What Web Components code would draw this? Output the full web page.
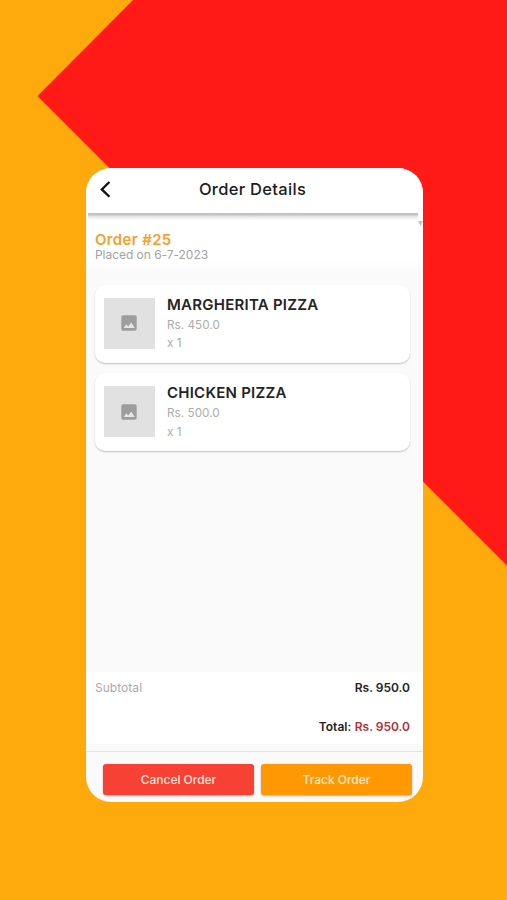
<!DOCTYPE html>
<html lang="en"><head><meta charset="utf-8"><title>Order Details</title>
<style>
html,body{margin:0;height:100%;overflow:hidden}
body{font-family:Inter,"Liberation Sans",sans-serif;background:#ffaa0c}
</style></head><body>
<promo-stage>
  <phone-screen>
    <nav-header slot="header">Order Details</nav-header>
    <order-intro number="25">Placed on 6-7-2023</order-intro>
    <item-list>
      <order-item price="Rs. 450.0" qty="x 1">MARGHERITA PIZZA</order-item>
      <order-item price="Rs. 500.0" qty="x 1">CHICKEN PIZZA</order-item>
    </item-list>
    <order-summary></order-summary>
    <action-bar slot="footer">
      <action-button style="--bg:#f74134;--fg:#ffe6dc">Cancel Order</action-button>
      <action-button style="--bg:#ff9803;--fg:#ffebc4">Track Order</action-button>
    </action-bar>
  </phone-screen>
</promo-stage>
<script>
const define=(name,html)=>customElements.define(name,class extends HTMLElement{
  constructor(){
    super();
    const t=document.createElement('template');
    t.innerHTML=html;
    this.attachShadow({mode:'open'}).append(t.content.cloneNode(true));
  }
  connectedCallback(){
    this.shadowRoot.querySelectorAll('[data-attr]').forEach(e=>{
      e.textContent=(e.dataset.prefix||'')+this.getAttribute(e.dataset.attr);
    });
  }
});
define('promo-stage',`<style>
:host{display:grid;box-sizing:border-box;width:507px;height:900px;padding:167.5px 84px 98.5px 86px;background:#ffaa0c;position:relative}
svg{position:absolute;inset:0}
::slotted(*){position:relative}
</style><svg width="507" height="900"><path d="M133 0 37.5 96 507 565.5V0z" fill="#ff1917"/></svg><slot></slot>`);
define('phone-screen',`<style>
:host{display:flex;flex-direction:column;width:337px;height:634px;border-radius:25px;background:#fafafa;overflow:hidden}
main{flex:1;display:flex;flex-direction:column;position:relative}
i{position:absolute;right:0;top:8px;width:5px;height:5px;background:#c4c4c4;clip-path:polygon(0 0,100% 0,50% 100%)}
</style><slot name="header"></slot><main><slot></slot><i></i></main><slot name="footer"></slot>`);
define('nav-header',`<style>
:host{display:grid;grid-template-columns:40px 1fr 44px;align-items:center;height:45.5px;background:#fff;position:relative;z-index:1}
:host::after{content:"";position:absolute;left:2px;right:5px;top:45px;height:7px;background:linear-gradient(#c0c0c0,#c6c6c6 25%,#e9e9e9 55%,#fff0)}
svg{margin-left:12px;display:block}
h1{margin:0;text-align:center;font-size:16.5px;line-height:20px;font-weight:500;color:#1c1c1c;letter-spacing:.3px;padding-bottom:2px}
</style><svg width="16" height="20" viewBox="0 0 16 20"><path d="M11.4 2 3.8 9.4l7.6 7.4" fill="none" stroke="#111" stroke-width="2.3"/></svg><h1><slot></slot></h1>`);
define('order-intro',`<style>
:host{display:block;height:58px;box-sizing:border-box;padding:17.5px 0 0 9px;background:linear-gradient(#fff 82%,#fafafa)}
h2{margin:0;font-size:15px;line-height:18px;font-weight:600;color:#f4a02c;letter-spacing:.34px}
p{margin:-.5px 0 0;font-size:12px;line-height:14px;color:#a3a3a3;letter-spacing:-.04px}
</style><h2 data-attr="number" data-prefix="Order #"></h2><p><slot></slot></p>`);
define('item-list',`<style>:host{display:flex;flex-direction:column;gap:10.5px;padding:13.5px 13px 0 9px;flex:1}</style><slot></slot>`);
define('order-item',`<style>
:host{display:flex;box-sizing:border-box;height:78px;padding:13px 9px 0 8.5px;gap:12.5px;background:#fff;border-radius:10px;box-shadow:0 1px 1.5px #0000003d}
.pic{width:51px;height:51px;background:#e1e1e1;display:grid;place-items:center;flex:none}
svg{display:block}
h3{margin:-2px 0 2px;font-size:15px;line-height:18px;font-weight:600;color:#242424;letter-spacing:.24px}
p{margin:0;font-size:11.7px;line-height:18.7px;color:#acacac;letter-spacing:.04px}
</style><div class="pic"><svg width="16" height="16" viewBox="0 0 16 16"><rect x=".3" y=".3" width="15.4" height="15.4" rx="1.8" fill="#9d9d9d"/><path d="M2.6 13 5.3 9.3l1.9 2.2 3-3.9 3.6 5.4z" fill="#e5e5e5"/></svg></div>
<div><h3><slot></slot></h3><p data-attr="price"></p><p data-attr="qty"></p></div>`);
define('order-summary',`<style>
:host{display:block;height:72px;box-sizing:border-box;background:#fff;padding:8px 13px 0 9px;font-size:12px;line-height:15px;margin-bottom:7px;font-weight:600;color:#242424}
div{display:flex;justify-content:space-between}
.total{justify-content:flex-end;margin-top:24px;gap:3.5px}
.sub{font-weight:400;color:#aaa;letter-spacing:.04px}
.red{color:#b1303b}
</style><div><span class="sub">Subtotal</span><span>Rs. 950.0</span></div><div class="total"><span>Total:</span><span class="red">Rs. 950.0</span></div>`);
define('action-bar',`<style>
:host{display:grid;grid-template-columns:151px 151px;gap:7px;box-sizing:border-box;height:50.5px;padding:12px 0 0 17px;border-top:1px solid #e3e3e5}
</style><slot></slot>`);
define('action-button',`<style>
:host{display:grid;height:31px}
button{all:unset;text-align:center;font:500 12px/30px Inter,"Liberation Sans",sans-serif;letter-spacing:-.03px;color:var(--fg);background:var(--bg);border-radius:3px;box-shadow:0 1px 2px #00000048}
</style><button><slot></slot></button>`);
</script></body></html>
